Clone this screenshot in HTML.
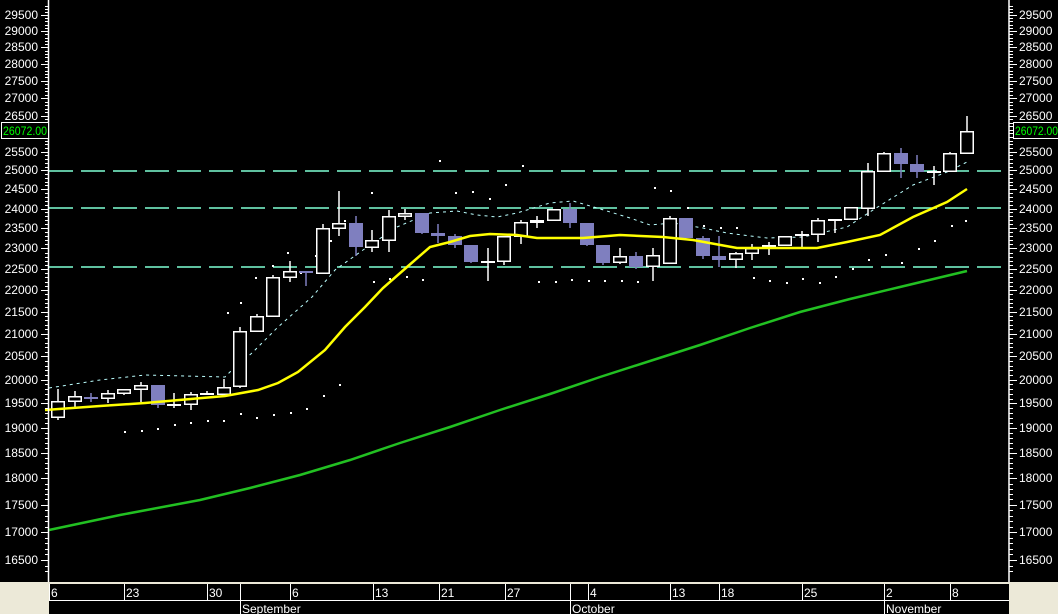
<!DOCTYPE html>
<html><head><meta charset="utf-8"><style>
html,body{margin:0;padding:0;background:#000;width:1058px;height:614px;overflow:hidden}
svg{display:block}
text{font-family:"Liberation Sans",sans-serif;font-size:12px;fill:#fff}
</style></head><body>
<svg id="s" width="1058" height="614" viewBox="0 0 1058 614" xmlns="http://www.w3.org/2000/svg">
<rect width="1058" height="614" fill="#000"/>
<g id="grid" stroke="#7fffd4" stroke-width="1.5" stroke-dasharray="24 8">
<line x1="49" y1="171" x2="1008" y2="171"/>
<line x1="49" y1="208" x2="1008" y2="208"/>
<line x1="49" y1="267" x2="1008" y2="267"/>
</g>
<g id="dots" fill="#fff"></g>
<polyline fill="none" stroke="#22c022" stroke-width="2.5" points="49,530 120,515 200,500 250,488 300,475 350,460 400,443 450,427 500,410 550,394 600,377 650,361 700,345 750,328 800,312 850,299 900,287 967,271"/>
<polyline fill="none" stroke="#bff" stroke-width="1" stroke-dasharray="3 4" points="49,388 100,380 145,375 225,377 232,370 252,353 278,327 312,297 335,270 363,250 397,227 430,213 457,211 477,215 497,217 517,213 550,203 573,201 597,208 630,218 650,225 673,223 703,228 727,233 767,238 803,237 847,227 873,210 913,185 947,172 967,162"/>
<g id="candles"></g>
<polyline fill="none" stroke="#ffff00" stroke-width="2.5" points="45,410 100,406 145,403 225,396 258,390 278,383 298,372 325,350 345,327 365,307 383,288 407,267 430,247 450,242 470,236 490,234 517,235 537,238 583,238 620,235 663,237 693,240 737,248 817,248 847,242 880,235 913,217 947,202 967,189"/>
<line x1="48.5" y1="0" x2="48.5" y2="583" stroke="#fff" stroke-width="1.5"/>
<line x1="1009" y1="0" x2="1009" y2="583" stroke="#fff" stroke-width="1.5"/>
<g id="ticks" stroke="#fff" stroke-width="1"></g>
<g text-anchor="end" id="ll">
<text x="38" y="19">29500</text><text x="38" y="35">29000</text><text x="38" y="51">28500</text><text x="38" y="68">28000</text><text x="38" y="85">27500</text><text x="38" y="102">27000</text><text x="38" y="120">26500</text><text x="38" y="156">25500</text><text x="38" y="174">25000</text><text x="38" y="193">24500</text><text x="38" y="213">24000</text><text x="38" y="232">23500</text><text x="38" y="252">23000</text><text x="38" y="273">22500</text><text x="38" y="294">22000</text><text x="38" y="316">21500</text><text x="38" y="338">21000</text><text x="38" y="360">20500</text><text x="38" y="384">20000</text><text x="38" y="407">19500</text><text x="38" y="432">19000</text><text x="38" y="457">18500</text><text x="38" y="482">18000</text><text x="38" y="509">17500</text><text x="38" y="536">17000</text><text x="38" y="564">16500</text>
</g>
<g>
<text x="1019" y="19">29500</text><text x="1019" y="35">29000</text><text x="1019" y="51">28500</text><text x="1019" y="68">28000</text><text x="1019" y="85">27500</text><text x="1019" y="102">27000</text><text x="1019" y="120">26500</text><text x="1019" y="156">25500</text><text x="1019" y="174">25000</text><text x="1019" y="193">24500</text><text x="1019" y="213">24000</text><text x="1019" y="232">23500</text><text x="1019" y="252">23000</text><text x="1019" y="273">22500</text><text x="1019" y="294">22000</text><text x="1019" y="316">21500</text><text x="1019" y="338">21000</text><text x="1019" y="360">20500</text><text x="1019" y="384">20000</text><text x="1019" y="407">19500</text><text x="1019" y="432">19000</text><text x="1019" y="457">18500</text><text x="1019" y="482">18000</text><text x="1019" y="509">17500</text><text x="1019" y="536">17000</text><text x="1019" y="564">16500</text>
</g>
<rect x="1.5" y="122.5" width="47" height="16" fill="#000" stroke="#fff"/>
<text x="3" y="135" textLength="44" lengthAdjust="spacingAndGlyphs" style="fill:#00ff00">26072.00</text>
<rect x="1013.5" y="122.5" width="46" height="16" fill="#000" stroke="#fff"/>
<text x="1015" y="135" textLength="43" lengthAdjust="spacingAndGlyphs" style="fill:#00ff00">26072.00</text>
<rect x="0" y="582" width="1058" height="2" fill="#ece9d8"/>
<rect x="0" y="584" width="49" height="30" fill="#ece9d8"/>
<rect x="1009" y="584" width="49" height="30" fill="#ece9d8"/>
<line x1="49" y1="600.5" x2="1009" y2="600.5" stroke="#fff"/>
<g stroke="#fff" stroke-width="1">
<line x1="49.5" y1="584" x2="49.5" y2="600"/><line x1="124.5" y1="584" x2="124.5" y2="600"/><line x1="207.5" y1="584" x2="207.5" y2="600"/><line x1="240.5" y1="584" x2="240.5" y2="614"/><line x1="290.5" y1="584" x2="290.5" y2="600"/><line x1="373.5" y1="584" x2="373.5" y2="600"/><line x1="439.5" y1="584" x2="439.5" y2="600"/><line x1="505.5" y1="584" x2="505.5" y2="600"/><line x1="570.5" y1="584" x2="570.5" y2="614"/><line x1="588.5" y1="584" x2="588.5" y2="600"/><line x1="670.5" y1="584" x2="670.5" y2="600"/><line x1="719.5" y1="584" x2="719.5" y2="600"/><line x1="802.5" y1="584" x2="802.5" y2="600"/><line x1="884.5" y1="584" x2="884.5" y2="614"/><line x1="950.5" y1="584" x2="950.5" y2="600"/>
</g>
<g>
<text x="51" y="597">6</text><text x="126" y="597">23</text><text x="209" y="597">30</text><text x="292" y="597">6</text><text x="375" y="597">13</text><text x="441" y="597">21</text><text x="507" y="597">27</text><text x="590" y="597">4</text><text x="672" y="597">13</text><text x="721" y="597">18</text><text x="804" y="597">25</text><text x="886" y="597">2</text><text x="952" y="597">8</text>
<text x="242" y="613">September</text><text x="572" y="613">October</text><text x="886" y="613">November</text>
</g>
</svg>
<script>
var NS="http://www.w3.org/2000/svg";
function el(p,t,a){var e=document.createElementNS(NS,t);for(var k in a)e.setAttribute(k,a[k]);p.appendChild(e);return e;}
var tk=document.getElementById("ticks");
function Y(v){return 15+938*Math.log(29500/v);}
for(var v=16300;v<=29800;v+=100){var y=Math.round(Y(v))+0.5;if(y<0||y>581)continue;var maj=v%500==0;
el(tk,"line",{x1:maj?41:45,y1:y,x2:48,y2:y});el(tk,"line",{x1:1009,y1:y,x2:maj?1017:1013,y2:y});}
var C=[[51,401,418,389,420,0],[68,396,402,391,408,0],[84,397,398,393,402,1],[101,393,399,390,403,0],[117,389,394,389,395,0],[134,385,390,382,402,0],[151,385,405,385,408,1],[167,404,406,393,408,0],[184,394,405,392,410,0],[200,393,394,391,395,0],[217,387,395,379,396,0],[233,331,387,327,388,0],[250,316,332,314,332,0],[266,277,317,275,317,0],[283,271,278,261,282,0],[299,271,273,271,286,1],[316,228,274,224,274,0],[332,223,229,191,236,0],[349,223,247,216,256,1],[365,240,248,230,252,0],[382,216,241,210,252,0],[398,213,217,209,220,0],[415,213,233,213,234,1],[431,233,236,224,243,1],[448,236,245,234,248,1],[464,245,262,245,263,1],[481,261,262,248,281,0],[497,236,262,236,265,0],[514,222,237,220,244,0],[530,220,223,216,228,0],[547,209,221,209,221,0],[563,209,223,203,228,1],[580,223,245,223,246,1],[596,245,263,245,265,1],[613,256,263,248,264,0],[629,256,267,252,269,1],[646,255,267,248,281,0],[663,218,264,216,264,0],[679,218,238,218,238,1],[696,238,256,236,259,1],[712,256,260,236,267,1],[729,253,260,252,268,0],[745,248,254,244,260,0],[762,245,246,242,255,0],[778,236,246,236,246,0],[795,234,236,231,247,0],[811,220,235,218,242,0],[828,219,220,219,233,0],[844,207,220,207,220,0],[861,171,209,163,216,0],[877,153,172,152,172,0],[894,153,164,148,178,1],[910,164,172,155,178,1],[927,171,172,166,185,0],[943,153,172,152,172,0],[960,131,154,116,154,0]];
var cg=document.getElementById("candles");
C.forEach(function(c){var x=c[0],w=14,cx=x+7,col=c[5]?"#7f7fbf":"#fff";
el(cg,"line",{x1:cx,y1:c[3],x2:cx,y2:c[4],stroke:col,"stroke-width":1.5});
var h=Math.max(c[2]-c[1],2);
if(c[5])el(cg,"rect",{x:x,y:c[1],width:w,height:h,fill:col});
else if(h<=2)el(cg,"rect",{x:x,y:c[1],width:w,height:2,fill:"#fff"});
else el(cg,"rect",{x:x+0.75,y:c[1]+0.75,width:w-1.5,height:h-1.5,fill:"#000",stroke:"#fff","stroke-width":1.5});});
var D=[[124,431],[141,430],[157,428],[174,424],[190,422],[207,420],[223,420],[240,413],[256,417],[273,414],[290,412],[306,408],[323,395],[339,384],[373,281],[389,278],[406,276],[422,279],[439,160],[455,192],[472,191],[489,198],[505,184],[522,165],[538,281],[555,281],[571,279],[588,280],[604,280],[621,280],[637,281],[654,187],[670,190],[687,207],[703,225],[720,227],[736,227],[753,277],[769,280],[786,282],[802,278],[819,282],[835,276],[852,268],[868,259],[885,254],[901,262],[918,248],[934,240],[951,225],[965,220],[371,192],[344,220],[330,240],[315,255],[300,272],[287,252],[272,265],[255,277],[240,302],[227,312]];
var dg=document.getElementById("dots");
D.forEach(function(d){el(dg,"rect",{x:d[0],y:d[1],width:2,height:2});});
</script>
</body></html>
